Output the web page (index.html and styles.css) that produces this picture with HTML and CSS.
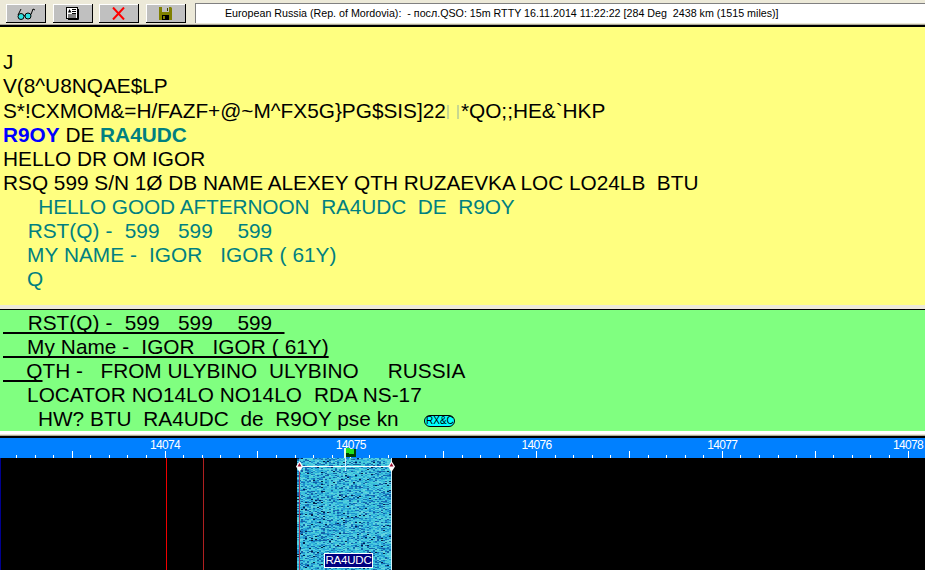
FILE: index.html
```html
<!DOCTYPE html>
<html>
<head>
<meta charset="utf-8">
<title>RTTY</title>
<link rel="stylesheet" href="styles.css">
</head>
<body>
<div class="toolbar">
  <div class="buttons">
    <button class="tool"><svg width="18" height="13" viewBox="0 0 18 13"><circle cx="4" cy="9.5" r="3" fill="#2fe0e0" stroke="#000"/><circle cx="11" cy="9" r="3" fill="#2fe0e0" stroke="#000"/><path d="M7 9 L8 8.5 M1 8 L4 2 M14 7.5 L16 2 L18 3" fill="none" stroke="#000"/></svg></button>
    <button class="tool"><svg width="13" height="13" viewBox="0 0 13 13"><rect x="0.5" y="0.5" width="11" height="11" fill="#fff" stroke="#000"/><path d="M2 5.5 L3.5 2 L5.5 5.5 Z" fill="#000"/><path d="M6 2.5 H10 M6 4.5 H10 M6 6.5 H10 M2 8 H10 M2 10 H10" stroke="#000"/><path d="M12.5 2 V12.5 H2" stroke="#000" fill="none"/></svg></button>
    <button class="tool"><svg width="13" height="13" viewBox="0 0 13 13"><path d="M1 0.5 L12 12.5 M12 0.5 L1 12.5" stroke="#f00" stroke-width="2"/></svg></button>
    <button class="tool"><svg width="13" height="13" viewBox="0 0 13 13"><path d="M0 0 H12 L13 1 V13 H0 Z" fill="#808000"/><rect x="3" y="0" width="7" height="5" fill="#c0c0c0"/><rect x="8" y="1" width="1" height="3" fill="#404000"/><rect x="3" y="8" width="7" height="5" fill="#000"/><rect x="4" y="9" width="2" height="3" fill="#808000"/></svg></button>
  </div>
  <div class="status">European Russia (Rep. of Mordovia):  - посл.QSO: 15m RTTY 16.11.2014 11:22:22 [284 Deg  2438 km (1515 miles)]</div>
</div>
<div class="rx">
  <div class="line">J</div>
  <div class="line">V(8^U8NQAE$LP</div>
  <div class="line step">S*!CXMOM&amp;=H/FAZF+@~M^FX5G}PG$SIS]22<span class="ghost"></span><span class="ghost"></span>*QO;;HE&amp;`HKP</div>
  <div class="line"><b class="call-blue">R9OY</b> DE <b class="teal">RA4UDC</b></div>
  <div class="line">HELLO DR OM IGOR</div>
  <div class="line">RSQ 599 S/N 1Ø DB NAME ALEXEY QTH RUZAEVKA LOC LO24LB  BTU</div>
  <div class="line teal tight">      HELLO GOOD AFTERNOON  RA4UDC  DE  R9OY</div>
  <div class="line teal wide">    RST(Q) -  599   599    599</div>
  <div class="line teal airy">    MY NAME -  IGOR   IGOR ( 61Y)</div>
  <div class="line teal airy">    Q</div>
</div>
<div class="tx">
  <div class="line wide"><span class="sent">    RST(Q) -  599   599    599  </span></div>
  <div class="line airy"><span class="sent">    My Name -  IGOR   IGOR ( 61Y)</span></div>
  <div class="line snug"><span class="sent">    Q</span>TH -   FROM ULYBINO  ULYBINO     RUSSIA</div>
  <div class="line airy">    LOCATOR NO14LO NO14LO  RDA NS-17</div>
  <div class="line snug">      HW? BTU  RA4UDC  de  R9OY pse kn <span class="badge">RX&amp;C</span></div>
</div>
<div class="divider"></div>
<div class="ruler">
  <svg id="scale" width="925" height="20"></svg>
</div>
<div class="waterfall">
  <div class="edge"></div>
  <div class="marker-red"></div>
  <div class="marker-dim"></div>
  <div class="signal">
    <canvas id="noise" width="95" height="112"></canvas>
    <div class="sig-red"></div>
    <div class="sig-edge"></div>
    <div class="tune"></div>
    <div class="tune-mark"></div>
    <svg class="handle handle-l" width="7" height="11" viewBox="0 0 7 11"><path d="M3.5 0 L7 5.5 L3.5 11 L0 5.5 Z" fill="#fff"/><path d="M3.5 2 L5.5 5.5 H1.5 Z" fill="#a01030"/></svg>
    <svg class="handle handle-r" width="7" height="11" viewBox="0 0 7 11"><path d="M3.5 0 L7 5.5 L3.5 11 L0 5.5 Z" fill="#fff"/><path d="M3.5 2 L5.5 5.5 H1.5 Z" fill="#a01030"/></svg>
    <svg class="flag" width="12" height="10" viewBox="0 0 12 10"><rect x="2" y="1" width="10" height="8" fill="#004000"/><rect x="0" y="0" width="2" height="10" fill="#e0ffe0"/><path d="M2 0 H6 V1 H10 V6 H5 V5 H2 Z" fill="#20e020"/></svg>
    <div class="tag">RA4UDC</div>
  </div>
</div>
<script src="app.js"></script>
</body>
</html>
```
FILE: styles.css
```css
* { box-sizing: border-box; }
html, body { margin: 0; padding: 0; }
body { width: 925px; height: 570px; overflow: hidden; background: #ece9d8; font-family: "Liberation Sans", Arial, sans-serif; }
.toolbar { height: 27px; display: flex; align-items: flex-start; padding: 4px 0 0 6px; background: #ece9d8; border-bottom: 2px solid #000; box-shadow: inset 0 -1px 0 #aca899; }
.buttons { display: flex; gap: 6.67px; }
.tool { width: 40px; height: 19px; padding: 0; display: flex; align-items: center; justify-content: center; background: #c0c0c0; border: 0; border-right: 1px solid #000; border-bottom: 1px solid #000; box-shadow: inset 1px 1px 0 #fff; }
.status { margin: -1px 0 0 9px; flex: 1; height: 20px; line-height: 18px; padding-left: 29px; background: #fff; border-top: 1px solid #808080; border-left: 1px solid #808080; font-family: "Liberation Sans", sans-serif; font-size: 10.7px; color: #000; white-space: pre; overflow: hidden; }
.rx { height: 278px; padding: 23px 0 0 3px; background: #ffff80; margin-bottom: 4px; }
.tx { height: 122px; padding: 1px 0 0 3px; background: #80ff80; border-top: 1px solid #000; }
.line { height: 24px; line-height: 24px; font-size: 20.8px; white-space: pre; color: #000; }
.step { margin-top: 1px; }
.snug { word-spacing: 0.05px; }
.airy { word-spacing: 0.25px; }
.wide { word-spacing: 0.4px; }
.tight { word-spacing: 0.2px; letter-spacing: -0.1px; }
.teal { color: #008080; }
.call-blue { color: #0000ff; }
.ghost { display: inline-block; width: 2px; height: 14px; margin-left: 1px; margin-right: 8px; background: #c8d890; vertical-align: -1px; }
.ghost + .ghost { margin-left: 0; margin-right: 2px; }
.sent { text-decoration: underline; text-decoration-thickness: 2px; text-underline-offset: 2px; text-decoration-skip-ink: none; }
.badge { display: inline-block; margin-left: 20px; width: 31px; height: 12px; line-height: 10px; border: 1px solid #000; border-radius: 6px; background: #00ffff; font-size: 10px; text-align: center; vertical-align: 2px; color: #000; }
.divider { height: 7px; background: linear-gradient(#fff 0 3px, #ece9d8 3px 4px, #aca899 4px 5px, #000 5px); }
.ruler { height: 20px; background: #0080ff; }
#scale { display: block; }
.tick { stroke: #fff; stroke-width: 1; }
.freq { fill: #fff; font-family: "Liberation Sans", sans-serif; font-size: 12px; letter-spacing: -0.7px; text-anchor: middle; }
.waterfall { position: relative; height: 112px; background: #000; }
.edge { position: absolute; left: 0; top: 0; bottom: 0; width: 1px; background: #000090; }
.marker-red { position: absolute; left: 166px; top: 0; bottom: 0; width: 1px; background: #f00000; }
.marker-dim { position: absolute; left: 203px; top: 0; bottom: 0; width: 1px; background: #b02020; }
.signal { position: absolute; left: 297px; top: 0; width: 95px; height: 112px; }
#noise { display: block; }
.sig-red { position: absolute; left: 2px; top: 12px; bottom: 0; width: 1px; background: #a04060; }
.sig-edge { position: absolute; right: 0; top: 0; bottom: 0; width: 1px; background: #d0f0f8; }
.tune { position: absolute; left: 2px; right: 1px; top: 8px; height: 1px; background: #fff; }
.tune-mark { position: absolute; left: 48px; top: 0; width: 1px; height: 13px; background: #d0f0ff; }
.handle { position: absolute; top: 3px; }
.handle-l { left: -1px; }
.handle-r { left: 91px; }
.flag { position: absolute; left: 47px; top: -10px; }
.tag { position: absolute; left: 27px; top: 95px; width: 49px; height: 15px; line-height: 13px; border: 1px solid #fff; background: #000080; color: #fff; font-size: 11.5px; letter-spacing: -0.2px; text-align: center; }
```
FILE: app.js
```js
// Frequency scale: ticks every 18.575px, labels every 185.75px.
var svg = document.getElementById('scale');
var NS = 'http://www.w3.org/2000/svg';
for (var i = 0; i < 52; i++) {
  var x = Math.round(16 + 18.575 * i);
  var major = (i - 3) % 5 === 0;
  var l = document.createElementNS(NS, 'line');
  l.setAttribute('class', 'tick');
  l.setAttribute('x1', x + 0.5);
  l.setAttribute('x2', x + 0.5);
  l.setAttribute('y1', major ? 13 : 17);
  l.setAttribute('y2', 20);
  svg.appendChild(l);
}
for (var k = 0; k < 5; k++) {
  var t = document.createElementNS(NS, 'text');
  t.setAttribute('class', 'freq');
  t.setAttribute('x', 165 + 185.75 * k);
  t.setAttribute('y', 11);
  t.textContent = String(14074 + k);
  svg.appendChild(t);
}
// Waterfall noise, seeded so that the picture is stable.
var c = document.getElementById('noise');
var g = c.getContext('2d');
var seed = 987654;
function rnd() { seed = (seed * 1664525 + 1013904223) >>> 0; return (seed >>> 8) / 16777216; }
var palette = ['#3cc0dc', '#2aa8d8', '#50cce0', '#1e90cc', '#68d4e0', '#2aa8d8', '#3cc0dc', '#1670b8', '#50cce0', '#48d0d8', '#1460a8'];
for (var y = 0; y < c.height; y++) {
  for (var x2 = 0; x2 < c.width; x2 += 2) {
    var r = rnd();
    g.fillStyle = r < 0.03 ? '#04204c' : palette[Math.floor(rnd() * palette.length)];
    g.fillRect(x2, y, 2, 1);
  }
}
```
